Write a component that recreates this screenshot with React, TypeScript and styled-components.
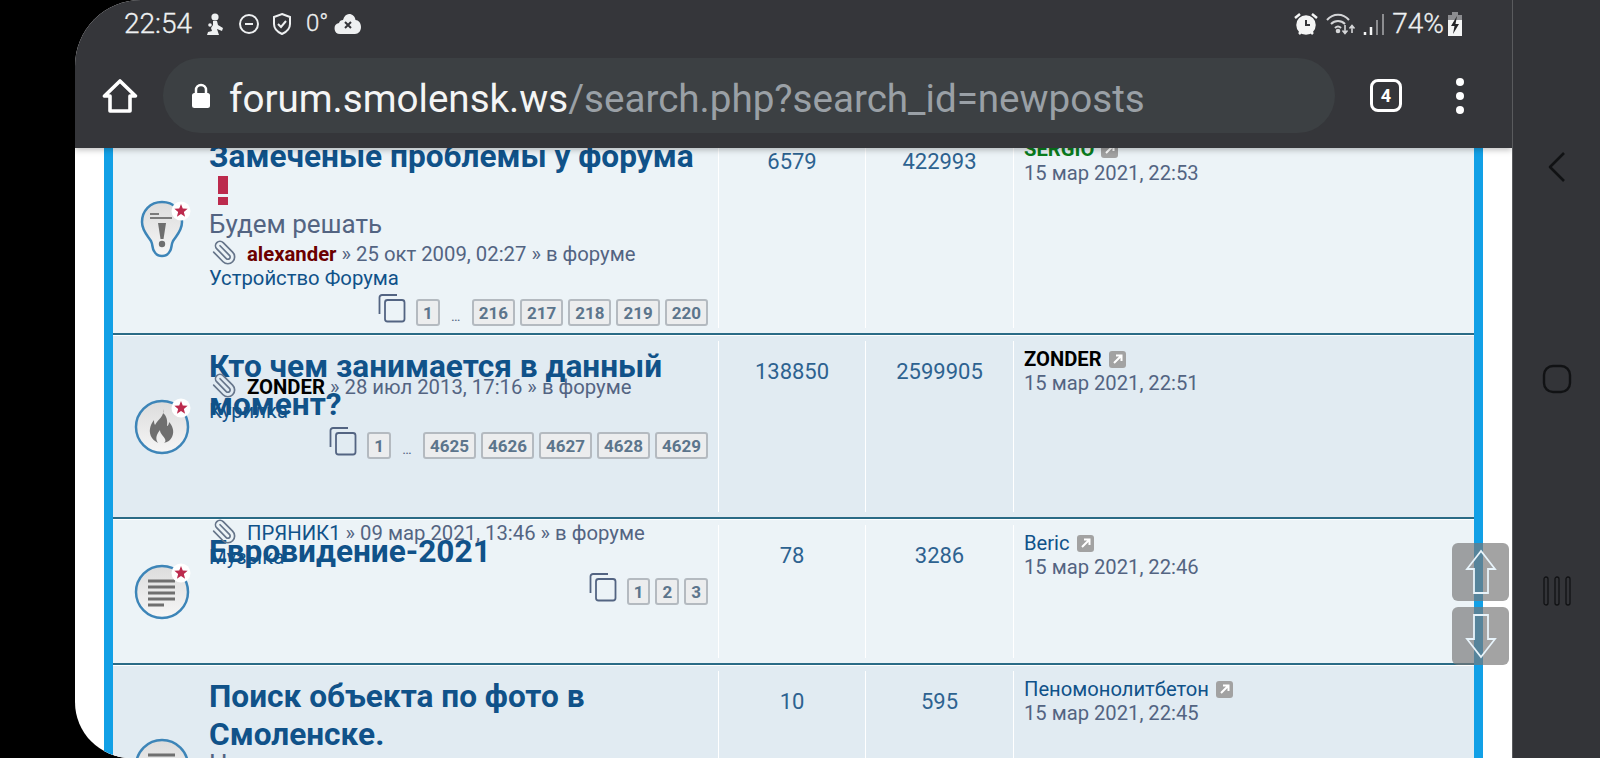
import React from 'react';
import styled, { createGlobalStyle } from 'styled-components';

const GlobalStyle = createGlobalStyle`
  html, body { margin: 0; padding: 0; background: #000; }
  body { font-family: Roboto, "Noto Sans", sans-serif; }
`;

const Frame = styled.div`
  width: 1600px;
  height: 758px;
  display: flex;
  background: #000;
  overflow: hidden;
`;

const Screen = styled.div`
  position: relative;
  margin-left: 75px;
  width: 1437px;
  display: flex;
  flex-direction: column;
  background: #fff;
  border-radius: 66px 0 0 56px;
  overflow: hidden;
`;

const Chrome = styled.header`
  position: relative;
  z-index: 2;
  height: 148px;
  flex: none;
  background: #35363a;
  box-shadow: 0 2px 6px rgba(0, 0, 0, 0.25);
`;

const StatusBar = styled.div`
  height: 46px;
  padding: 1px 49px 0 49px;
  box-sizing: border-box;
  display: flex;
  align-items: center;
  justify-content: space-between;
  color: #eef0f1;
`;

const StatusGroup = styled.div<{ $gap: number }>`
  display: flex;
  align-items: center;
  gap: ${(p) => p.$gap}px;
`;

const StatusText = styled.span<{ $size?: number }>`
  font-size: ${(p) => p.$size ?? 28}px;
  font-weight: 300;
  line-height: 45px;
  -webkit-text-stroke: 0.3px #eef0f1;
`;

const Toolbar = styled.div`
  height: 102px;
  padding: 12px 0 15px 27px;
  box-sizing: border-box;
  display: flex;
  align-items: center;
`;

const Omnibox = styled.div`
  margin-left: 25px;
  width: 1172px;
  height: 75px;
  border-radius: 38px;
  background: #3c4043;
  display: flex;
  align-items: center;
  padding-left: 28px;
  box-sizing: border-box;
  font-size: 38.6px;
  white-space: nowrap;
`;

const Host = styled.span`
  margin: 5px 0 0 18px;
  color: #f4f5f5;
`;

const Path = styled.span`
  margin-top: 5px;
  color: #9aa0a6;
`;

const TabCount = styled.div`
  margin-left: 35px;
  width: 32px;
  height: 33px;
  box-sizing: border-box;
  border: 3px solid #fff;
  border-radius: 8px;
  color: #fff;
  font-size: 18px;
  font-weight: 700;
  display: flex;
  align-items: center;
  justify-content: center;
`;

const MenuDots = styled.div`
  margin-left: 54px;
  display: flex;
  flex-direction: column;
  gap: 6px;
`;

const MenuDot = styled.span`
  width: 8px;
  height: 8px;
  border-radius: 50%;
  background: #fff;
`;

const Page = styled.main`
  flex: 1;
  padding: 0 29px;
  overflow: hidden;
`;

const Panel = styled.div`
  margin-top: -22px;
  border-left: 9px solid #12a0e6;
  border-right: 9px solid #12a0e6;
  background: #fff;
`;

const Row = styled.section<{ $alt?: boolean; $height: number }>`
  height: ${(p) => p.$height}px;
  box-sizing: border-box;
  margin-bottom: 1px;
  padding: 5px 0;
  display: grid;
  grid-template-columns: 96px 509px 147px 148px 1fr;
  background: ${(p) => (p.$alt ? '#e1ebf2' : '#ecf3f7')};
  border-bottom: 2px solid #2a6b86;
`;

const IconCell = styled.div`
  display: flex;
  align-items: center;
  padding-left: 18px;
`;

const TopicCell = styled.div`
  display: grid;
  grid-template-columns: 100%;
  align-items: start;
`;

const Layer = styled.div<{ $top: number }>`
  grid-area: 1 / 1;
  margin-top: ${(p) => p.$top}px;
  padding-right: 10px;
`;

const Title = styled.h2`
  margin: 0;
  color: #105289;
  font-size: 31.6px;
  line-height: 38px;
  font-weight: 700;
`;

const Subtitle = styled.div`
  margin-top: -5px;
  color: #536482;
  font-size: 26px;
  line-height: 30px;
`;

const Meta = styled.div`
  color: #536482;
  font-size: 20.3px;
  line-height: 24px;
`;

const ClipSlot = styled.span`
  display: inline-block;
  width: 38px;
  height: 24px;
  vertical-align: top;
`;

const Author = styled.span<{ $color: string; $bold?: boolean }>`
  color: ${(p) => p.$color};
  font-weight: ${(p) => (p.$bold ? 700 : 400)};
`;

const ForumLink = styled.div`
  color: #105289;
`;

const Pagination = styled.div`
  margin-top: 3px;
  display: flex;
  justify-content: flex-end;
  align-items: flex-end;
  gap: 5px;
`;

const PagesIcon = styled.span`
  display: flex;
  margin-right: 5px;
  margin-bottom: 3px;
`;

const PageButton = styled.span`
  height: 27px;
  min-width: 14px;
  padding: 0 5px;
  box-sizing: border-box;
  display: flex;
  align-items: center;
  justify-content: center;
  background: #ecedee;
  border: 2px solid #b4bac0;
  border-radius: 3px;
  color: #5c758c;
  font-size: 17px;
  font-weight: 700;
`;

const Ellipsis = styled.span`
  width: 22px;
  text-align: center;
  color: #536482;
  font-size: 14px;
  line-height: 20px;
`;

const StatCell = styled.div`
  border-left: 1px solid #fff;
  padding-top: 18px;
  text-align: center;
  color: #2d6290;
  font-size: 22px;
  line-height: 26px;
`;

const LastCell = styled.div`
  border-left: 1px solid #fff;
  padding: 6px 0 0 10px;
  color: #536482;
  font-size: 20.2px;
  line-height: 24px;
`;

const LastAuthor = styled.div<{ $color: string; $bold?: boolean }>`
  display: flex;
  align-items: center;
  gap: 7px;
  color: ${(p) => p.$color};
  font-weight: ${(p) => (p.$bold ? 700 : 400)};
`;

const ScrollButtons = styled.div`
  position: absolute;
  top: 543px;
  left: 1377px;
  display: flex;
  flex-direction: column;
  gap: 6px;
  z-index: 1;
`;

const ScrollButton = styled.div`
  width: 57px;
  height: 58px;
  border-radius: 6px;
  background: rgba(120, 120, 120, 0.68);
  display: flex;
  align-items: center;
  justify-content: center;
`;

const NavBar = styled.nav`
  flex: 1;
  border-left: 1px solid #5a5b5e;
  background: #333438;
  display: flex;
  flex-direction: column;
  justify-content: center;
`;

const NavItem = styled.div`
  height: 212px;
  display: flex;
  align-items: center;
  justify-content: center;
`;

const StatusIcons = {
  person: (
    <svg width="22" height="24" viewBox="0 0 22 24" fill="#eef0f1">
      <circle cx="11" cy="5" r="3.6" />
      <path d="M9 9h4l1 4 5 3-1 3-5-2 2 6H3l1-3 4-1-1-3 2-3z" />
      <circle cx="6" cy="13" r="1.8" />
    </svg>
  ),
  dnd: (
    <svg width="22" height="22" viewBox="0 0 22 22" fill="none" stroke="#eef0f1" strokeWidth="2">
      <circle cx="11" cy="11" r="9" />
      <path d="M7 11h8" />
    </svg>
  ),
  shield: (
    <svg width="22" height="24" viewBox="0 0 22 24" fill="none" stroke="#eef0f1" strokeWidth="2">
      <path d="M10 2l8 3v7c0 5-3.5 8-8 10-4.500-2-8-5-8-10V5z" />
      <path d="M6 12l3 3 5-6" />
    </svg>
  ),
  cloud: (
    <svg width="30" height="24" viewBox="0 0 30 24">
      <path fill="#eef0f1" d="M7 22a5.500 5.500 0 0 1-1-10.900c.5-2 2-3.100 4-3.100 1-4 3.500-6 6-6 3.500 0 6 2.500 6.500 6 3 .2 5.500 3 5.500 7 0 4-2.500 7-6 7z" />
      <path stroke="#35363a" strokeWidth="2" d="M12 10l6 6M18 10l-6 6" />
    </svg>
  ),
  alarm: (
    <svg width="26" height="26" viewBox="0 0 26 26" fill="none" stroke="#f4f5f5" strokeWidth="2.500">
      <circle cx="13" cy="14" r="8.500" fill="#f4f5f5" />
      <path d="M13 9v5h4" stroke="#35363a" strokeWidth="2" />
      <path d="M2 7l5-4M24 7l-5-4M6 23l2-2M20 23l-2-2" />
    </svg>
  ),
  wifi: (
    <svg width="30" height="26" viewBox="0 0 30 26" fill="none" stroke="#d5d6d8" strokeWidth="2">
      <path d="M1 9c6-7 16-7 22 0" />
      <path d="M5 13c4-4 10-4 14 0" />
      <path d="M9 17c2-2 4-2 6 0" />
      <circle cx="12" cy="20" r="1.300" fill="#d5d6d8" />
      <path d="M19 14v8M16.500 19.500l2.500 3 2.500-3M26 22v-7M23.500 17.500l2.500-3 2.500 3" strokeWidth="1.600" />
    </svg>
  ),
  signal: (
    <svg width="22" height="24" viewBox="0 0 22 24" fill="none" strokeWidth="2.500">
      <path d="M2 23v-3" stroke="#f4f5f5" />
      <path d="M8 23v-8" stroke="#f4f5f5" />
      <path d="M14 23V8M20 23V2" stroke="#8c8d90" strokeWidth="2" />
    </svg>
  ),
  battery: (
    <svg width="16" height="26" viewBox="0 0 16 26">
      <path fill="#8c8d90" d="M5 1h6v3h4v6H1V4h4z" />
      <path fill="#f4f5f5" d="M1 9h14v16H1z" />
      <path fill="#232427" d="M10 5L4 15h3.500L6 23l6-10H8.500z" />
    </svg>
  ),
};

const HomeIcon = () => (
  <svg width="36" height="36" viewBox="0 0 36 36" fill="none" stroke="#fff" strokeWidth="3.600" strokeLinejoin="round">
    <path d="M18 3L2.500 18H8v15h20V18h5.500z" />
  </svg>
);

const LockIcon = () => (
  <svg width="20" height="26" viewBox="0 0 20 26">
    <path fill="none" stroke="#fff" strokeWidth="2.500" d="M5 11V7a5 5 0 0 1 10 0v4" />
    <rect x="1" y="10" width="18" height="15" rx="2.500" fill="#fff" />
  </svg>
);

const ExclamationIcon = () => (
  <svg width="32" height="34" viewBox="0 0 32 34" style={{ verticalAlign: 'top' }}>
    <path fill="#bc2a4d" d="M9 0h10v18H9zM9 21h10v8H9z" />
  </svg>
);

const Star = ({ cx, cy }: { cx: number; cy: number }) => {
  const points = Array.from({ length: 10 }, (_, i) => {
    const r = i % 2 === 0 ? 7 : 3;
    const a = (Math.PI / 5) * i - Math.PI / 2;
    return `${cx + r * Math.cos(a)},${cy + r * Math.sin(a)}`;
  }).join(' ');
  return (
    <g>
      <circle cx={cx} cy={cy} r="9.500" fill="#fff" />
      <polygon points={points} fill="#bc2a4d" />
    </g>
  );
};

type TopicKind = 'alert' | 'fire' | 'list';

const TopicIcon = ({ kind, unread }: { kind: TopicKind; unread: boolean }) => (
  <svg width="62" height="66" viewBox="0 0 62 66">
    <defs>
      <linearGradient id={`shade-${kind}`} x1="0" y1="0" x2="0" y2="1">
        <stop offset="0" stopColor="#dcdcdc" />
        <stop offset="1" stopColor="#f6f6f6" />
      </linearGradient>
    </defs>
    {kind === 'alert' ? (
      <>
        <path
          d="M31 5c-12 0-20 9-20 20 0 9 6 14 9 19 2 4 1 7 3 10 2 4 5 5 8 5s6-1 8-5c2-3 1-6 3-10 3-5 9-10 9-19 0-11-8-20-20-20z"
          fill={`url(#shade-${kind})`}
          stroke="#3d85b8"
          strokeWidth="2.500"
        />
        <path d="M19 17h9M19 21h22" stroke="#7b7b7b" strokeWidth="2" />
        <path d="M27 26h8l-2.500 16h-3z" fill="#6f6f6f" />
        <circle cx="31" cy="47" r="3.200" fill="#6f6f6f" />
      </>
    ) : (
      <>
        <circle cx="31" cy="33" r="26" fill={`url(#shade-${kind})`} stroke="#3d85b8" strokeWidth="2.500" />
        {kind === 'fire' ? (
          <path
            d="M32 15c2 7-5 10-8 16-1-2-1-3-1-5-4 5-6 12-2 18 2 3 5 4 6 5-2-3-3-7 2-13 0 4 4 6 5 9 1 2 0 3-1 4 3-1 6-2 8-6 3-6 0-12-3-15 0 2-1 4-2 4 1-6-1-11-4-13z"
            fill="#6f6f6f"
          />
        ) : (
          <path d="M17 22h27M17 28h27M17 34h27M17 40h27M17 46h16" stroke="#6f6f6f" strokeWidth="2.800" />
        )}
      </>
    )}
    {unread && <Star cx={50} cy={14} />}
  </svg>
);

const ClipIcon = () => (
  <svg
    width="27"
    height="27"
    viewBox="0 0 24 24"
    fill="none"
    stroke="#66758a"
    strokeWidth="1.500"
    strokeLinecap="round"
    style={{ margin: '-3px 0 0 2px', transform: 'scaleX(-1)' }}
  >
    <path d="m16 6-8.414 8.586a2 2 0 0 0 2.829 2.829l8.414-8.586a4 4 0 1 0-5.657-5.657l-8.379 8.551a6 6 0 1 0 8.485 8.485l8.379-8.551" />
  </svg>
);

const CopyIcon = () => (
  <svg width="28" height="30" viewBox="0 0 28 30" fill="none" stroke="#536482" strokeWidth="1.800">
    <path d="M19 2H4a2.500 2.500 0 0 0-2.500 2.500V21" />
    <rect x="7" y="7" width="19.500" height="21.500" rx="2.500" />
  </svg>
);

const LastPostIcon = () => (
  <svg width="17" height="17" viewBox="0 0 17 17">
    <rect width="17" height="17" rx="3" fill="#a2a2a2" />
    <path d="M5 12l7-7M7 4.500h5.500V10" fill="none" stroke="#fff" strokeWidth="2" />
  </svg>
);

const ArrowIcon = ({ down }: { down?: boolean }) => (
  <svg width="32" height="46" viewBox="0 0 32 46" style={down ? { transform: 'rotate(180deg)' } : undefined}>
    <path d="M16 2L2 20h7v24h14V20h7z" fill="none" stroke="#e8f4fb" strokeWidth="1.800" />
  </svg>
);

type Topic = {
  kind: TopicKind;
  unread: boolean;
  alt?: boolean;
  height: number;
  title: string;
  alert?: boolean;
  subtitle?: string;
  titleTop: number;
  metaTop?: number;
  author?: string;
  authorColor?: string;
  authorBold?: boolean;
  date?: string;
  forum?: string;
  pages?: string[];
  hasGap?: boolean;
  replies: string;
  views: string;
  last: string;
  lastColor: string;
  lastBold?: boolean;
  lastDate: string;
};

const topics: Topic[] = [
  {
    kind: 'alert',
    unread: true,
    height: 209,
    title: 'Замеченые проблемы у форума ',
    alert: true,
    subtitle: 'Будем решать',
    titleTop: 7,
    metaTop: 111,
    author: 'alexander',
    authorColor: '#6b0000',
    authorBold: true,
    date: '25 окт 2009, 02:27',
    forum: 'Устройство Форума',
    pages: ['1', '216', '217', '218', '219', '220'],
    hasGap: true,
    replies: '6579',
    views: '422993',
    last: 'SERGIO',
    lastColor: '#0a7d1e',
    lastBold: true,
    lastDate: '15 мар 2021, 22:53',
  },
  {
    kind: 'fire',
    unread: true,
    alt: true,
    height: 183,
    title: 'Кто чем занимается в данный момент?',
    titleTop: 7,
    metaTop: 34,
    author: 'ZONDER',
    authorColor: '#000',
    authorBold: true,
    date: '28 июл 2013, 17:16',
    forum: 'Курилка',
    pages: ['1', '4625', '4626', '4627', '4628', '4629'],
    hasGap: true,
    replies: '138850',
    views: '2599905',
    last: 'ZONDER',
    lastColor: '#000',
    lastBold: true,
    lastDate: '15 мар 2021, 22:51',
  },
  {
    kind: 'list',
    unread: true,
    height: 145,
    title: 'Евровидение-2021',
    titleTop: 8,
    metaTop: -4,
    author: 'ПРЯНИК1',
    authorColor: '#105289',
    date: '09 мар 2021, 13:46',
    forum: 'Музыка',
    pages: ['1', '2', '3'],
    replies: '78',
    views: '3286',
    last: 'Beric',
    lastColor: '#105289',
    lastDate: '15 мар 2021, 22:46',
  },
  {
    kind: 'list',
    unread: false,
    alt: true,
    height: 202,
    title: 'Поиск объекта по фото в Смоленске.',
    subtitle: 'Н',
    titleTop: 7,
    replies: '10',
    views: '595',
    last: 'Пеномонолитбетон',
    lastColor: '#105289',
    lastDate: '15 мар 2021, 22:45',
  },
];

const App = (): React.ReactElement => {
  return (
    <Frame>
      <GlobalStyle />
      <Screen>
        <Chrome>
          <StatusBar>
            <StatusGroup $gap={12}>
              <StatusText>22:54</StatusText>
              {StatusIcons.person}
              {StatusIcons.dnd}
              {StatusIcons.shield}
              <StatusGroup $gap={5}>
                <StatusText $size={24}>0°</StatusText>
                {StatusIcons.cloud}
              </StatusGroup>
            </StatusGroup>
            <StatusGroup $gap={7}>
              {StatusIcons.alarm}
              {StatusIcons.wifi}
              {StatusIcons.signal}
              <StatusGroup $gap={3}>
                <StatusText>74%</StatusText>
                {StatusIcons.battery}
              </StatusGroup>
            </StatusGroup>
          </StatusBar>
          <Toolbar>
            <HomeIcon />
            <Omnibox>
              <LockIcon />
              <Host>forum.smolensk.ws</Host>
              <Path>/search.php?search_id=newposts</Path>
            </Omnibox>
            <TabCount>4</TabCount>
            <MenuDots>
              <MenuDot />
              <MenuDot />
              <MenuDot />
            </MenuDots>
          </Toolbar>
        </Chrome>
        <Page>
          <Panel>
            {topics.map((topic) => (
              <Row key={topic.title} $alt={topic.alt} $height={topic.height}>
                <IconCell>
                  <TopicIcon kind={topic.kind} unread={topic.unread} />
                </IconCell>
                <TopicCell>
                  <Layer $top={topic.titleTop}>
                    <Title>
                      {topic.title}
                      {topic.alert && <ExclamationIcon />}
                    </Title>
                    {topic.subtitle && <Subtitle>{topic.subtitle}</Subtitle>}
                  </Layer>
                  {topic.author && (
                    <Layer $top={topic.metaTop ?? 0}>
                      <Meta>
                        <ClipSlot>
                          <ClipIcon />
                        </ClipSlot>
                        <Author $color={topic.authorColor ?? '#105289'} $bold={topic.authorBold}>
                          {topic.author}
                        </Author>
                        {` » ${topic.date} » в форуме`}
                        <ForumLink>{topic.forum}</ForumLink>
                      </Meta>
                      <Pagination>
                        <PagesIcon>
                          <CopyIcon />
                        </PagesIcon>
                        {topic.pages?.map((page, index) => (
                          <React.Fragment key={page}>
                            <PageButton>{page}</PageButton>
                            {topic.hasGap && index === 0 && <Ellipsis>…</Ellipsis>}
                          </React.Fragment>
                        ))}
                      </Pagination>
                    </Layer>
                  )}
                </TopicCell>
                <StatCell>{topic.replies}</StatCell>
                <StatCell>{topic.views}</StatCell>
                <LastCell>
                  <LastAuthor $color={topic.lastColor} $bold={topic.lastBold}>
                    {topic.last}
                    <LastPostIcon />
                  </LastAuthor>
                  {topic.lastDate}
                </LastCell>
              </Row>
            ))}
          </Panel>
        </Page>
        <ScrollButtons>
          <ScrollButton>
            <ArrowIcon />
          </ScrollButton>
          <ScrollButton>
            <ArrowIcon down />
          </ScrollButton>
        </ScrollButtons>
      </Screen>
      <NavBar>
        <NavItem>
          <svg width="20" height="32" viewBox="0 0 20 32" fill="none" stroke="#111214" strokeWidth="2.600" strokeLinejoin="round">
            <path d="M17 2L3 16l14 14" />
          </svg>
        </NavItem>
        <NavItem>
          <svg width="30" height="30" viewBox="0 0 30 30" fill="none" stroke="#111214" strokeWidth="2.400">
            <rect x="2" y="2" width="26" height="26" rx="9" />
          </svg>
        </NavItem>
        <NavItem>
          <svg width="28" height="30" viewBox="0 0 28 30" fill="none" stroke="#111214" strokeWidth="1.300">
            <rect x="1" y="1" width="4" height="28" rx="2" />
            <rect x="12" y="1" width="4" height="28" rx="2" />
            <rect x="23" y="1" width="4" height="28" rx="2" />
          </svg>
        </NavItem>
      </NavBar>
    </Frame>
  );
};

export default App;
